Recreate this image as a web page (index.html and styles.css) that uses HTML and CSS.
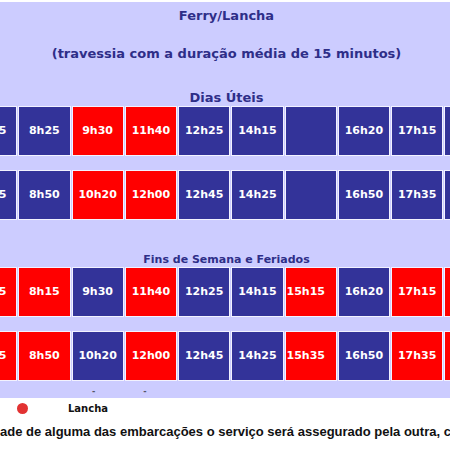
FILE: index.html
```html
<!DOCTYPE html>
<html>
  <head>
    <title>Ferry/Lancha - Horários</title>
    <link rel="stylesheet" href="styles.css">
  </head>
  <body>
    <section class="panel">
      <div class="title">Ferry/Lancha</div>
      <div class="subtitle">(travessia com a duração média de 15 minutos)</div>

      <div class="section-title">Dias Úteis</div>
      <div class="row">
        <div class="cell ferry">7h45</div>
        <div class="cell ferry">8h25</div>
        <div class="cell lancha">9h30</div>
        <div class="cell lancha">11h40</div>
        <div class="cell ferry">12h25</div>
        <div class="cell ferry">14h15</div>
        <div class="cell ferry"></div>
        <div class="cell ferry">16h20</div>
        <div class="cell ferry">17h15</div>
        <div class="cell ferry">18h15</div>
      </div>
      <div class="row row-next">
        <div class="cell ferry">7h55</div>
        <div class="cell ferry">8h50</div>
        <div class="cell lancha">10h20</div>
        <div class="cell lancha">12h00</div>
        <div class="cell ferry">12h45</div>
        <div class="cell ferry">14h25</div>
        <div class="cell ferry"></div>
        <div class="cell ferry">16h50</div>
        <div class="cell ferry">17h35</div>
        <div class="cell ferry">18h35</div>
      </div>

      <div class="section-title small">Fins de Semana e Feriados</div>
      <div class="row">
        <div class="cell lancha">7h45</div>
        <div class="cell lancha">8h15</div>
        <div class="cell ferry">9h30</div>
        <div class="cell lancha">11h40</div>
        <div class="cell ferry">12h25</div>
        <div class="cell ferry">14h15</div>
        <div class="cell lancha left">15h15</div>
        <div class="cell ferry">16h20</div>
        <div class="cell lancha">17h15</div>
        <div class="cell lancha">18h15</div>
      </div>
      <div class="row row-next">
        <div class="cell lancha">7h55</div>
        <div class="cell lancha">8h50</div>
        <div class="cell ferry">10h20</div>
        <div class="cell lancha">12h00</div>
        <div class="cell ferry">12h45</div>
        <div class="cell ferry">14h25</div>
        <div class="cell lancha left">15h35</div>
        <div class="cell ferry">16h50</div>
        <div class="cell lancha">17h35</div>
        <div class="cell lancha">18h35</div>
      </div>

      <div class="dashes">
        <span class="dash">-</span>
        <span class="dash">-</span>
      </div>
    </section>

    <div class="legend">
      <span class="dot"></span>
      <span class="legend-label">Lancha</span>
    </div>
    <p class="note">ade de alguma das embarcações o serviço será assegurado pela outra, c</p>
  </body>
</html>
```

FILE: styles.css
```css
html,
body {
  margin: 0;
  padding: 0;
  background-color: #ffffff;
  overflow: hidden;
}
body {
  font-family: "DejaVu Sans", Verdana, sans-serif;
  width: 450px;
}

.panel {
  background-color: #ccccff;
  margin-top: 2px;
  margin-left: -35px;
  width: 523px;
  height: 396px;
  color: #2e2e88;
  font-weight: bold;
  text-align: center;
}
.title {
  font-size: 13px;
  line-height: 16px;
  padding-top: 6px;
}
.subtitle {
  font-size: 13px;
  line-height: 16px;
  margin-top: 22px;
}
.section-title {
  font-size: 13px;
  line-height: 16px;
  margin-top: 28px;
}
.section-title.small {
  font-size: 11px;
  line-height: 14px;
  margin-top: 33px;
}

.row {
  display: flex;
  gap: 1px;
}
.row-next {
  margin-top: 14px;
}
.cell {
  width: 50.25px;
  height: 48px;
  flex: none;
  border: 1px solid #f2f2ff;
  color: #ffffff;
  font-size: 11px;
  line-height: 48px;
  text-align: center;
  white-space: nowrap;
  overflow: hidden;
}
.ferry {
  background-color: #333399;
}
.lancha {
  background-color: #ff0000;
}
.cell.left {
  text-align: left;
  padding-left: 1px;
  width: 49.25px;
}

.dashes {
  display: flex;
  gap: 48px;
  padding-left: 127px;
  font-size: 8px;
  line-height: 22px;
  color: #555566;
}

.legend {
  display: flex;
  align-items: center;
  height: 14px;
  margin-top: 3px;
  padding-left: 17px;
}
.dot {
  width: 11px;
  height: 11px;
  border-radius: 50%;
  background-color: #e23232;
}
.legend-label {
  margin-left: 40px;
  font-size: 10px;
  font-weight: bold;
  color: #111111;
}
.note {
  margin: 9px 0 0;
  font-family: "Liberation Sans", Arial, sans-serif;
  font-size: 13px;
  line-height: 16px;
  font-weight: bold;
  color: #111111;
  white-space: nowrap;
}
```
